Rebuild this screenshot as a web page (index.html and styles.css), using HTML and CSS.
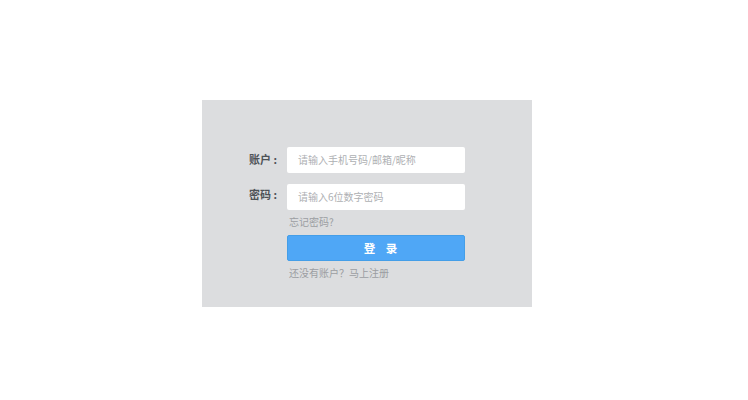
FILE: index.html
```html
<!DOCTYPE html>
<html lang="zh">
<head>
<meta charset="utf-8">
<link rel="stylesheet" href="styles.css">
</head>
<body>
<div class="page">
  <div class="panel">
    <div class="row">
      <label class="label">账户 :</label>
      <div class="input">请输入手机号码/邮箱/昵称</div>
    </div>
    <div class="row row-2">
      <label class="label label-up">密码 :</label>
      <div class="input">请输入6位数字密码</div>
    </div>
    <div class="row">
      <span class="label"></span>
      <a class="link forgot">忘记密码?</a>
    </div>
    <div class="row">
      <span class="label"></span>
      <div class="btn">登&nbsp;&nbsp;&nbsp;&nbsp;录</div>
    </div>
    <div class="row">
      <span class="label"></span>
      <a class="link register">还没有账户？马上注册</a>
    </div>
  </div>
</div>
</body>
</html>
```

FILE: styles.css
```css
html, body {
  margin: 0;
  padding: 0;
  background: #ffffff;
  font-family: "Noto Sans CJK SC", "Noto Sans", sans-serif;
}
.page {
  padding: 100px 0 0 202px;
}
.panel {
  width: 330px;
  height: 207px;
  box-sizing: border-box;
  background: #dcdddf;
  padding-top: 47px;
  display: flex;
  flex-direction: column;
}
.row {
  display: flex;
  align-items: center;
}
.row-2 {
  margin-top: 11px;
}
.label {
  width: 75px;
  margin-right: 10px;
  text-align: right;
  font-size: 11px;
  font-weight: 700;
  color: #4e5257;
  position: relative;
  top: -1px;
  white-space: pre;
}
.label-up {
  top: -3px;
}
.input {
  width: 178px;
  height: 26px;
  box-sizing: border-box;
  background: #ffffff;
  border-radius: 2px;
  padding-left: 11px;
  font-size: 10px;
  line-height: 26px;
  color: #aeb0b3;
}
.link {
  font-size: 10px;
  color: #9b9ea2;
  text-decoration: none;
  line-height: 14px;
  padding-left: 2px;
}
.forgot {
  margin-top: 5px;
}
.btn {
  margin-top: 6px;
  width: 178px;
  height: 26px;
  box-sizing: border-box;
  background: #4fa7f6;
  border: 1px solid #449ee8;
  border-radius: 2px;
  color: #ffffff;
  font-size: 11.5px;
  font-weight: 700;
  text-align: center;
  line-height: 24px;
  padding-left: 9px;
}
.register {
  margin-top: 5px;
}
```
